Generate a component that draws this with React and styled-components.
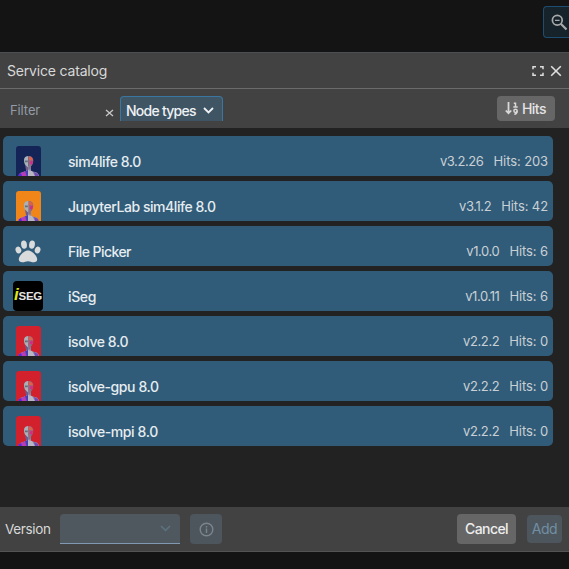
import React from 'react';
import styled, { createGlobalStyle } from 'styled-components';

const GlobalStyle = createGlobalStyle`
  * { box-sizing: border-box; }
  body {
    margin: 0;
    background: #141414;
    overflow: hidden;
    font-family: Inter, 'Open Sans', sans-serif;
  }
`;

const Page = styled.div`
  width: 569px;
  height: 569px;
  display: flex;
  flex-direction: column;
  background: #141414;
  overflow: hidden;
`;

const Workspace = styled.div`
  height: 52px;
  flex: none;
  display: flex;
  justify-content: flex-end;
  padding-top: 6px;
`;

const ZoomButton = styled.div`
  width: 26px;
  height: 32px;
  border: 1px solid #1d4d70;
  border-right: 0;
  border-radius: 4px 0 0 4px;
  background: #17232b;
  padding: 7px 0 0 7px;
  overflow: hidden;
  svg { display: block; }
`;

const Window = styled.section`
  height: 500px;
  flex: none;
  display: flex;
  flex-direction: column;
  border-top: 1px solid #4b5054;
  border-bottom: 1px solid #545454;
  background: #222222;
`;

const TitleBar = styled.header`
  height: 36px;
  flex: none;
  display: flex;
  align-items: center;
  justify-content: space-between;
  padding: 0 7px;
  background: #424242;
  border-bottom: 1px solid #6b6b6b;
`;

const WindowActions = styled.div`
  display: flex;
  align-items: center;
  gap: 6px;
`;

const Text = styled.span`
  display: block;
  font-size: ${(p) => p.$size || 14}px;
  line-height: 20px;
  font-weight: ${(p) => p.$weight || 400};
  letter-spacing: ${(p) => p.$track || 0}px;
  color: ${(p) => p.$color || '#d8d8d8'};
  white-space: nowrap;
`;

const Toolbar = styled.div`
  height: 39px;
  flex: none;
  display: flex;
  align-items: flex-start;
  padding: 7px 14px 0 10px;
  background: #424242;
`;

const FilterField = styled.div`
  width: 110px;
  height: 30px;
  display: flex;
  justify-content: space-between;
  padding: 4px 6px 0 0;
  svg { display: block; margin-top: 9px; }
`;

const NodeTypes = styled.div`
  width: 103px;
  height: 25px;
  display: flex;
  align-items: center;
  justify-content: space-between;
  padding: 3px 8px 0 5px;
  border: 1px solid #3a76a0;
  border-bottom: 0;
  border-radius: 4px 4px 0 0;
  background: #405564;
`;

const SortButton = styled.div`
  width: 58px;
  height: 25px;
  margin-left: auto;
  display: flex;
  align-items: center;
  gap: 3px;
  padding-left: 8px;
  border-radius: 4px;
  background: #666666;
`;

const List = styled.div`
  flex: 1;
  display: flex;
  flex-direction: column;
  gap: 5px;
  padding: 8px 16px 0 3px;
`;

const Row = styled.div`
  height: 40px;
  display: flex;
  padding: 10px 5px 0 10px;
  border-radius: 5px;
  background: #305c79;
  overflow: hidden;
`;

const IconSlot = styled.div`
  width: 30px;
  height: 30px;
  margin-right: 25px;
  display: flex;
  justify-content: center;
  svg { display: block; }
`;

const Thumb = styled.div`
  width: 25px;
  height: 34px;
  flex: none;
  border-radius: 3px;
  background: ${(p) => p.$color};
`;

const PawBox = styled.div`
  padding-top: 4px;
`;

const SegLogo = styled.div`
  width: 30px;
  height: 30px;
  border-radius: 4px;
  background: #000;
  display: flex;
  justify-content: center;
  align-items: baseline;
  font: 700 11.5px/30px 'Liberation Sans', sans-serif;
  letter-spacing: -0.3px;
  color: #e4e4e4;
  b { font: italic 700 17px/28px 'Liberation Sans', sans-serif; color: #dfe619; }
`;

const RowName = styled.div`
  flex: 1;
  padding-top: 6px;
`;

const RowMeta = styled.div`
  display: flex;
  gap: 10px;
  padding-top: 5px;
`;

const Footer = styled.footer`
  height: 44px;
  flex: none;
  display: flex;
  align-items: center;
  padding: 0 7px 0 5px;
  background: #424242;
`;

const VersionLabel = styled.div`
  width: 55px;
`;

const Select = styled.div`
  width: 120px;
  height: 30px;
  display: flex;
  align-items: center;
  justify-content: flex-end;
  padding-right: 9px;
  background: #50585f;
  border-bottom: 1px solid #8199b0;
  border-radius: 4px 4px 0 0;
`;

const Button = styled.div`
  width: ${(p) => p.$width}px;
  height: ${(p) => p.$height || 30}px;
  margin-left: ${(p) => p.$left};
  display: flex;
  align-items: center;
  justify-content: center;
  border-radius: 4px;
  background: ${(p) => (p.$disabled ? '#4d565d' : '#666666')};
`;

function Chevron({ color, width = 11, stroke = 1.8 }) {
  return (
    <svg width={width} height="7" viewBox="0 0 11 7" fill="none" stroke={color} strokeWidth={stroke}>
      <path d="M1 1 5.5 5.4 10 1" />
    </svg>
  );
}

function Bust() {
  return (
    <svg width="25" height="34" viewBox="0 0 25 34">
      <path d="M2.500 30 4 27 10 25 10 20 15 20 15 25 21 26.500 23 29V34H2.500Z" fill="#8b87a8" />
      <path d="M4 27.500 9 25.200 11 30H4Z" fill="#b83cb4" />
      <path d="M2.500 28.500 5 27 6 30H2.500Z" fill="#5a2bd8" />
      <path d="M9 25.300 12 24 12 30H10.500Z" fill="#4a3cb8" />
      <path d="M12 24 16 25 19 30H12Z" fill="#b9b6c4" />
      <path d="M18 26 22 28 22.500 30H19Z" fill="#7448b4" />
      <path d="M8 14C8 11.500 9.800 10 12.500 10V22C10 21 8 18 8 14Z" fill="#a9b2ba" />
      <path d="M12.500 10C15.800 10 17.300 12 17.300 14.500 17.300 18 15.500 21 12.500 22Z" fill="#96657f" />
      <path d="M13 10.500C15.500 10.500 16.800 12.500 16.800 14.500L13 14Z" fill="#dd6048" />
      <path d="M14.500 15H17L16 18.500 14 18Z" fill="#d42a8c" />
      <path d="M8.800 14.500H11.800V16.300H9Z" fill="#66707c" />
      <path d="M9 18.500 12 21.500 12 24 10 24Z" fill="#6d5b8c" />
      <path d="M13 18.500H15L14.500 23H12.500Z" fill="#82788e" />
    </svg>
  );
}

function Paw() {
  return (
    <svg width="26" height="24" viewBox="0 0 26 24" fill="#d8dadc">
      <ellipse cx="3.400" cy="10" rx="2.800" ry="3.500" transform="rotate(-20 3.400 10)" />
      <ellipse cx="9" cy="4.600" rx="2.900" ry="4.100" transform="rotate(-8 9 4.600)" />
      <ellipse cx="17" cy="4.600" rx="2.900" ry="4.100" transform="rotate(8 17 4.600)" />
      <ellipse cx="22.600" cy="10" rx="2.800" ry="3.500" transform="rotate(20 22.600 10)" />
      <path d="M13 10.500C9 10.500 3.800 16 3.800 19.300 3.800 21.500 5.200 22.300 7.200 22.300 9.500 22.300 11 21.200 13 21.200S16.500 22.300 18.800 22.300C20.800 22.300 22.200 21.500 22.200 19.300 22.200 16 17 10.500 13 10.500Z" />
    </svg>
  );
}

function ServiceIcon({ kind }) {
  if (kind === 'paw') return <PawBox><Paw /></PawBox>;
  if (kind === 'iseg') return <SegLogo><b>i</b>SEG</SegLogo>;
  return <Thumb $color={kind}><Bust /></Thumb>;
}

const services = [
  { name: 'sim4life 8.0', icon: '#142457', version: 'v3.2.26', hits: 203, track: -0.28 },
  { name: 'JupyterLab sim4life 8.0', icon: '#f0861a', version: 'v3.1.2', hits: 42, track: -0.3 },
  { name: 'File Picker', icon: 'paw', version: 'v1.0.0', hits: 6, track: -0.4 },
  { name: 'iSeg', icon: 'iseg', version: 'v1.0.11', hits: 6, track: -0.2 },
  { name: 'isolve 8.0', icon: '#d2202c', version: 'v2.2.2', hits: 0, track: -0.28 },
  { name: 'isolve-gpu 8.0', icon: '#d2202c', version: 'v2.2.2', hits: 0, track: -0.28 },
  { name: 'isolve-mpi 8.0', icon: '#d2202c', version: 'v2.2.2', hits: 0, track: -0.25 },
];

export default function App() {
  return (
    <Page>
      <GlobalStyle />
      <Workspace>
        <ZoomButton>
          <svg width="20" height="18" viewBox="0 0 20 18" fill="none" stroke="#a7a9aa" strokeWidth="1.700">
            <circle cx="6.300" cy="6.300" r="4.900" />
            <path d="M4 6.300H8.600" strokeWidth="1.300" />
            <path d="M9.800 9.800 15.500 15.500" strokeWidth="2.200" />
          </svg>
        </ZoomButton>
      </Workspace>
      <Window>
        <TitleBar>
          <Text $track={-0.18}>Service catalog</Text>
          <WindowActions>
            <svg width="12" height="10" viewBox="0 0 12 10" fill="none" stroke="#dedede" strokeWidth="1.500">
              <path d="M1 3.200V.8H4M8 .8H11V3.200M11 6.800V9.200H8M4 9.200H1V6.800" />
            </svg>
            <svg width="12" height="12" viewBox="0 0 12 12" stroke="#dedede" strokeWidth="1.600">
              <path d="M1.200 1.200 10.800 10.800M10.800 1.200 1.200 10.800" />
            </svg>
          </WindowActions>
        </TitleBar>
        <Toolbar>
          <FilterField>
            <Text $size={13} $color="#929ba6" $track={-0.1}>Filter</Text>
            <svg width="9" height="8" viewBox="0 0 9 8" stroke="#c9c9c9" strokeWidth="1.300">
              <path d="M1 1 8 7M8 1 1 7" />
            </svg>
          </FilterField>
          <NodeTypes>
            <Text $track={-0.75} $color="#eef2f5" $weight={500}>Node types</Text>
            <Chevron color="#eef2f5" />
          </NodeTypes>
          <SortButton>
            <svg width="14" height="13" viewBox="0 0 14 13" fill="none" stroke="#d8d8d8" strokeWidth="1.800">
              <path d="M3.500 0V11M.8 8.500 3.500 11.300 6.200 8.500" />
              <path d="M8.800 1.200H10.500V5M8.300 5H12.700" strokeWidth="1.500" />
              <circle cx="10.500" cy="8.800" r="1.600" strokeWidth="1.500" />
              <path d="M12.200 8.800C12.200 11 11 12.200 9.300 12.200" strokeWidth="1.500" />
            </svg>
            <Text $track={-0.55} $color="#e4e4e4" $weight={500}>Hits</Text>
          </SortButton>
        </Toolbar>
        <List>
          {services.map((s) => (
            <Row key={s.name}>
              <IconSlot><ServiceIcon kind={s.icon} /></IconSlot>
              <RowName><Text $track={s.track - 0.15} $weight={500} $color="#e6ecf0">{s.name}</Text></RowName>
              <RowMeta>
                <Text $size={13} $track={-0.4} $color="#c9d0d5">{s.version}</Text>
                <Text $size={13} $track={-0.1} $color="#c9d0d5">Hits: {s.hits}</Text>
              </RowMeta>
            </Row>
          ))}
        </List>
        <Footer>
          <VersionLabel><Text $size={13.5} $track={-0.35}>Version</Text></VersionLabel>
          <Select><Chevron color="#5c727e" stroke={1.5} /></Select>
          <Button $width={32} $left="10px" $disabled>
            <svg width="15" height="15" viewBox="0 0 15 15" fill="none" stroke="#7b858c" strokeWidth="1.400">
              <circle cx="7.500" cy="7.500" r="6.300" />
              <path d="M7.500 6.500V11M7.500 4V5.400" />
            </svg>
          </Button>
          <Button $width={59} $left="auto"><Text $track={-0.6} $color="#eeeeee" $weight={500}>Cancel</Text></Button>
          <Button $width={35} $height={28} $left="11px" $disabled><Text $track={-0.5} $color="#718fa3">Add</Text></Button>
        </Footer>
      </Window>
    </Page>
  );
}
